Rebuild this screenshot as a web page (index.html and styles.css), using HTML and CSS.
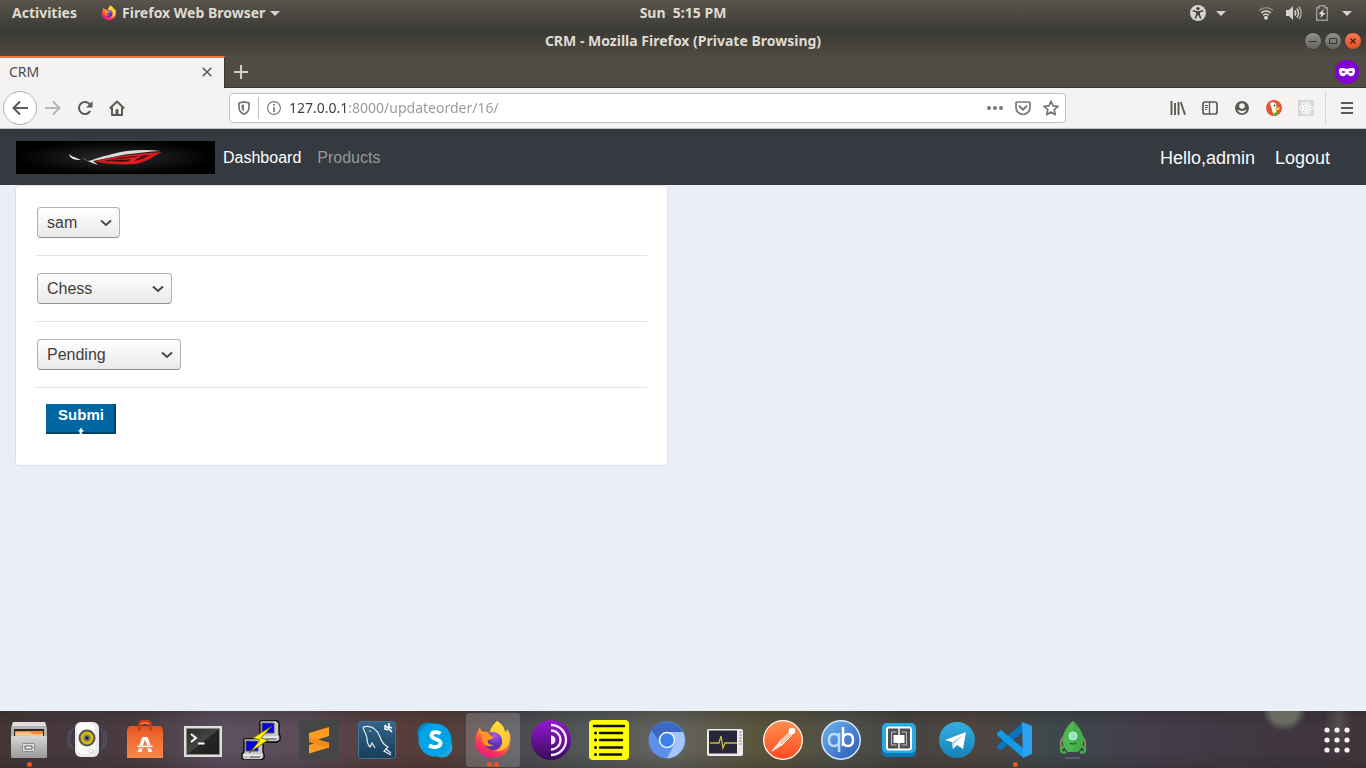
FILE: index.html
```html
<!DOCTYPE html>
<html lang="en">
<head>
<meta charset="utf-8">
<meta name="viewport" content="width=device-width, initial-scale=1">
<title>CRM</title>
<link rel="stylesheet" href="styles.css">
</head>
<body>
<header class="topbar">
  <div class="topbar-side">
    <button class="top-btn" type="button">Activities</button>
    <button class="top-btn app-menu" type="button">
      <svg width="16" height="16" viewBox="0 0 40 40"><use href="#firefox"/></svg>
      <span>Firefox Web Browser</span>
      <svg width="10" height="5" viewBox="0 0 10 5"><path d="M0 0h10L5 5z" fill="#d5d3cf"/></svg>
    </button>
  </div>
  <time class="clock">Sun&nbsp; 5:15 PM</time>
  <div class="topbar-side status">
    <button class="status-btn access" type="button" aria-label="Accessibility">
      <svg width="16" height="16" viewBox="0 0 16 16"><circle cx="8" cy="8" r="8" fill="#d5d3cf"/><circle cx="8" cy="3.6" r="1.7" fill="#45433d"/><path d="M2.800 5.800l4 1v3L5.200 13.500M13.200 5.800l-4 1v3l1.600 3.700" stroke="#45433d" stroke-width="1.600" fill="none"/><path d="M6.200 6.200h3.600v4H6.200z" fill="#45433d"/></svg>
      <svg width="10" height="5" viewBox="0 0 10 5"><path d="M0 0h10L5 5z" fill="#d5d3cf"/></svg>
    </button>
    <button class="status-btn system" type="button" aria-label="System menu">
      <svg width="16" height="16" viewBox="0 0 16 16"><g fill="none" stroke="#d5d3cf" stroke-width="1.600"><path d="M1.200 5.500C5 1.800 11 1.800 14.800 5.500" opacity=".45"/><path d="M3.300 8C6 5.400 10 5.400 12.700 8"/><path d="M5.200 10.300c1.600-1.500 4-1.500 5.600 0"/></g><circle cx="8" cy="12.800" r="2" fill="#d5d3cf"/></svg>
      <svg width="16" height="16" viewBox="0 0 16 16"><path d="M0 5h3l4-4v14l-4-4H0z" fill="#d5d3cf"/><g fill="none" stroke="#d5d3cf" stroke-width="1.500"><path d="M8.700 5.500c1.200 1.500 1.200 3.500 0 5M10.800 3.500c2.200 2.800 2.200 6.200 0 9"/><path d="M12.900 1.700c3 3.800 3 8.800 0 12.600" opacity=".7"/></g></svg>
      <svg width="16" height="16" viewBox="0 0 16 16"><path d="M2.700 2.700h2.600V.7h5.400v2h2.600v12.600H2.700z" fill="none" stroke="#9b9993" stroke-width="1.500"/><path d="M9.700 4L4.600 9.300h2.700L6.400 13l5-5H8.700z" fill="#e3e1dd"/></svg>
      <svg width="10" height="5" viewBox="0 0 10 5"><path d="M0 0h10L5 5z" fill="#d5d3cf"/></svg>
    </button>
  </div>
</header>

<div class="titlebar">
  <span class="window-title">CRM - Mozilla Firefox (Private Browsing)</span>
  <div class="window-controls">
    <button class="win-btn" type="button" aria-label="Minimize"><svg width="8" height="8" viewBox="0 0 8 8"><path d="M0 4.500h8" stroke="#35342f"/></svg></button>
    <button class="win-btn" type="button" aria-label="Maximize"><svg width="8" height="8" viewBox="0 0 8 8"><path d="M.5 1.500h7v5h-7z" fill="none" stroke="#35342f"/></svg></button>
    <button class="win-btn win-close" type="button" aria-label="Close"><svg width="8" height="8" viewBox="0 0 8 8"><path d="M1.500 1.500l5 5m0-5l-5 5" stroke="#4a2011" stroke-width="1.300"/></svg></button>
  </div>
</div>

<div class="tabbar">
  <div class="tab">
    <span>CRM</span>
    <button class="plain-btn" type="button" aria-label="Close tab"><svg width="10" height="10" viewBox="0 0 10 10"><path d="M.7.7l8.600 8.600m0-8.600L.7 9.300" stroke="#555" stroke-width="1.500"/></svg></button>
  </div>
  <button class="plain-btn new-tab" type="button" aria-label="New tab"><svg width="14" height="14" viewBox="0 0 14 14"><path d="M7 0v14M0 7h14" stroke="#d2d0cc" stroke-width="2"/></svg></button>
  <svg class="private" width="24" height="24" viewBox="0 0 24 24"><circle cx="12" cy="12" r="12" fill="#8000d7"/><path fill="#fff" fill-rule="evenodd" d="M4 10.500C4 8 6 7.800 8 8c1.800.2 2.600.8 4 .8S14.200 8.200 16 8c2-.2 4 0 4 2.500 0 3.200-1.300 5.700-4 5.700-2 0-2.600-2-4-2s-2 2-4 2c-2.700 0-4-2.500-4-5.700zm2.300 1.400c1.200 1.500 2.800 1.500 4.200 0-1.400-1.300-3-1.300-4.200 0zm7.200 0c1.400 1.500 3 1.500 4.200 0-1.200-1.300-2.800-1.300-4.200 0z"/></svg>
</div>

<div class="toolbar">
  <div class="nav-buttons">
    <button class="back" type="button" aria-label="Back"><svg width="16" height="16" viewBox="0 0 16 16"><path d="M16 8H1.500M8 1.500L1.500 8 8 14.500" fill="none" stroke="#5c5a56" stroke-width="2"/></svg></button>
    <button class="icon-btn" type="button" aria-label="Forward"><svg width="16" height="16" viewBox="0 0 16 16"><path d="M0 8h14.500M8 1.500L14.500 8 8 14.500" fill="none" stroke="#b8b6b3" stroke-width="2"/></svg></button>
    <button class="icon-btn" type="button" aria-label="Reload"><svg width="16" height="16" viewBox="0 0 16 16"><path d="M13.200 11A6 6 0 1 1 13 4.700" fill="none" stroke="#5c5a56" stroke-width="2"/><path d="M15.500 1v6.500H9z" fill="#5c5a56"/></svg></button>
    <button class="icon-btn" type="button" aria-label="Home"><svg width="16" height="16" viewBox="0 0 16 16"><path d="M.8 8.500L8 1.500l7.200 7M3 7.500V15h10V7.500" fill="none" stroke="#5c5a56" stroke-width="2" stroke-linejoin="round"/><path d="M6.500 15V10.500c0-2 3-2 3 0V15z" fill="#5c5a56"/></svg></button>
  </div>
  <div class="urlbar">
    <button class="plain-btn shield" type="button" aria-label="Tracking protection"><svg width="12" height="14" viewBox="0 0 12 14"><path d="M1 2l5-1.200L11 2v4c0 3.500-2 6-5 7.200C3 12 1 9.500 1 6z" fill="none" stroke="#777" stroke-width="1.700"/><path d="M6 3.400v7C4.300 9.500 3.500 8 3.500 6V4z" fill="#777"/></svg></button>
    <button class="plain-btn info" type="button" aria-label="Site information"><svg width="14" height="14" viewBox="0 0 14 14"><circle cx="7" cy="7" r="6.400" fill="none" stroke="#777" stroke-width="1.100"/><path d="M7 3v1.800M7 6v5" stroke="#777" stroke-width="1.700"/></svg></button>
    <input class="url-input" type="text" aria-label="Address" value="127.0.0.1:8000/updateorder/16/">
    <div class="url-actions">
      <button class="plain-btn" type="button" aria-label="Page actions"><svg width="16" height="16" viewBox="0 0 16 16"><g fill="#777"><circle cx="2" cy="8" r="2"/><circle cx="8" cy="8" r="2"/><circle cx="14" cy="8" r="2"/></g></svg></button>
      <button class="plain-btn" type="button" aria-label="Save to Pocket"><svg width="16" height="16" viewBox="0 0 16 16"><path d="M2 2h12q1 0 1 1v4.500a7 7 0 0 1-14 0V3q0-1 1-1z" fill="none" stroke="#777" stroke-width="1.700"/><path d="M4.500 6.300L8 9.700l3.500-3.400" fill="none" stroke="#777" stroke-width="2" stroke-linecap="round"/></svg></button>
      <button class="plain-btn" type="button" aria-label="Bookmark"><svg width="16" height="16" viewBox="0 0 16 16"><path d="M8 1.200l2 4.600 5 .5-3.800 3.400 1.100 5L8 12.100l-4.300 2.600 1.100-5L1 6.300l5-.5z" fill="none" stroke="#777" stroke-width="1.700" stroke-linejoin="round"/></svg></button>
    </div>
  </div>
  <div class="tool-buttons">
    <button class="icon-btn" type="button" aria-label="Library"><svg width="16" height="16" viewBox="0 0 16 16"><path d="M1.500 1v14M5 3v12M8.500 2v13M10.800 2.300L15 14.800" stroke="#5c5a56" stroke-width="1.900"/></svg></button>
    <button class="icon-btn" type="button" aria-label="Sidebars"><svg width="16" height="16" viewBox="0 0 16 16"><rect x="1" y="2" width="14" height="12" rx="2" fill="none" stroke="#5c5a56" stroke-width="1.700"/><path d="M7.500 2v12" stroke="#5c5a56" stroke-width="1.300"/><path d="M3 5.500h3M3 7.500h3M3 9.500h2" stroke="#5c5a56"/></svg></button>
    <button class="icon-btn" type="button" aria-label="Account"><svg width="16" height="16" viewBox="0 0 16 16"><circle cx="8" cy="8" r="7" fill="#5c5a56"/><circle cx="8" cy="6" r="2.800" fill="#f4f3f2"/><path d="M3.500 9.800c2.500 1.500 6.500 1.500 9 0-.8 2.200-2.500 3.500-4.500 3.500s-3.700-1.300-4.500-3.500z" fill="#f4f3f2"/></svg></button>
    <button class="icon-btn" type="button" aria-label="DuckDuckGo"><svg width="16" height="16" viewBox="0 0 16 16"><circle cx="8" cy="8" r="8" fill="#de5833"/><path d="M4 3.500C6 1.200 10 2 10.500 5.500L10 9l1 5.500-3.500.8L5.500 8C5 6 4.500 5 4 3.500z" fill="#fff"/><circle cx="8.500" cy="5.500" r=".9" fill="#245"/><path d="M9 8l5-1-1 2 1 .8-4.500 1z" fill="#fc3"/><path d="M7 13l5-1v3l-4 .5z" fill="#4caf35"/></svg></button>
    <button class="icon-btn" type="button" aria-label="React tools"><svg width="16" height="16" viewBox="0 0 16 16"><path d="M0 0h16v16H0z" fill="#d9d8d7"/><g fill="none" stroke="#fff"><ellipse cx="8" cy="8" rx="6.500" ry="2.500"/><ellipse cx="8" cy="8" rx="6.500" ry="2.500" transform="rotate(60 8 8)"/><ellipse cx="8" cy="8" rx="6.500" ry="2.500" transform="rotate(120 8 8)"/></g><circle cx="8" cy="8" r="1.300" fill="#fff"/></svg></button>
    <span class="separator"></span>
    <button class="icon-btn" type="button" aria-label="Menu"><svg width="16" height="16" viewBox="0 0 16 16"><path d="M2 3h12M2 8h12M2 13h12" stroke="#5c5a56" stroke-width="2"/></svg></button>
  </div>
</div>

<nav class="navbar">
  <a class="brand" href="#" aria-label="Home page">
    <svg width="199" height="33" viewBox="0 0 199 33">
      <defs><radialGradient id="glow"><stop offset="0" stop-color="#2c2c2c"/><stop offset="1" stop-color="#000"/></radialGradient></defs>
      <path d="M0 0h199v33H0z" fill="url(#glow)"/>
      <path d="M53 13c2 2 4 3 5 3l7 3c-6 0-11-1-12-6z" fill="#eee"/>
      <path d="M65.500 16l6.500 4 4-1c9-3 22-7 35-9 11-1.300 22-1.500 34 0-12 .5-24 2-36 3.500L77 20l5 4c-6-2-12-4-16.500-8z" fill="#dcdcdc"/>
      <path d="M78 20.500c20-5 44-8.500 68-9.500-8 4-15 10-26 12-13 1-28 0-42-2.500z" fill="#d61b1f"/>
      <path d="M88 20c14-3 28-5 46-6-5 2-8 4-11 5-10 2-24 2-35 1z" fill="#3d090b"/>
      <path d="M92 19.500l36-4.500-8 3zM100 21.500l24-1-6 1.500zM112 20l14-7-8 7z" fill="#e52226"/>
    </svg>
  </a>
  <a class="nav-link active" href="#">Dashboard</a>
  <a class="nav-link" href="#">Products</a>
  <div class="user-links"><span>Hello,admin</span><a href="#">Logout</a></div>
</nav>

<main class="page">
  <form class="card">
    <select class="field customer" aria-label="Customer"><option>sam</option></select>
    <hr>
    <select class="field product" aria-label="Product"><option>Chess</option></select>
    <hr>
    <select class="field order-status" aria-label="Status"><option>Pending</option></select>
    <hr>
    <button class="submit" type="button">Submit</button>
  </form>
</main>

<footer class="dock">
  <button class="dock-item" type="button" aria-label="Files">
    <svg width="40" height="40" viewBox="0 0 40 40"><defs><linearGradient id="metal" x2="0" y2="1"><stop stop-color="#d6d6d6"/><stop offset="1" stop-color="#999"/></linearGradient></defs><path d="M4 2h32l2 6v28q0 2-2 2H4q-2 0-2-2V8z" fill="#b3b3b3"/><path d="M4 2h32l1 4H3z" fill="#dedede"/><path d="M5 9h30v8H5z" fill="#262626"/><path d="M6 11h28v6H6z" fill="#f4853d"/><path d="M7 12h14l2 2h11v3H6z" fill="#ffc18c"/><path d="M2 16h36v20q0 2-2 2H4q-2 0-2-2z" fill="url(#metal)"/><rect x="13.500" y="23.500" width="12" height="8" rx="1" fill="#ddd" stroke="#8a8a8a"/><path d="M16 26h7v3h-7z" fill="#fff" stroke="#555"/></svg>
    <span class="dots"><i></i></span>
  </button>
  <button class="dock-item" type="button" aria-label="Music">
    <svg width="40" height="40" viewBox="0 0 40 40"><g fill="none" stroke="#4e6c91" stroke-width="1.500" opacity=".5"><path d="M6 8c-4 7-4 15 0 22M3 10c-3 6-3 12 0 18M34 8c4 7 4 15 0 22M37 10c3 6 3 12 0 18"/></g><rect x="8" y="2" width="24" height="35" rx="6" fill="#ebebeb"/><rect x="10" y="3" width="18" height="31" rx="6" fill="#fafafa"/><circle cx="20" cy="18" r="8.500" fill="#55554c"/><circle cx="20" cy="18" r="6.500" fill="#d8b70d"/><circle cx="20" cy="18" r="3.500" fill="#777"/><circle cx="20" cy="18" r="1.700" fill="#222"/><circle cx="24" cy="31" r="2" fill="#fff" stroke="#ccc"/></svg>
  </button>
  <button class="dock-item" type="button" aria-label="Software">
    <svg width="40" height="40" viewBox="0 0 40 40"><defs><linearGradient id="bag" x2="0" y2="1"><stop stop-color="#e2521e"/><stop offset=".3" stop-color="#ee6a2f"/><stop offset="1" stop-color="#f7874b"/></linearGradient></defs><path d="M4 6h32l2 4v28H2V10z" fill="url(#bag)"/><path d="M14.500 11V4q0-3 5.500-3t5.500 3v7" fill="none" stroke="#c9400f" stroke-width="2.500"/><path d="M16 4q4-2 8 0" stroke="#ff7042" fill="none" stroke-width="2"/><path d="M17.500 17h5l3 8H22l-2-5-2 5h-3.500zM12.500 25.500h15v1.800h-15zM14 28.500h3.700l-1 3.500h-4zM22.300 28.500H26l1.300 3.500h-4z" fill="#fff"/></svg>
  </button>
  <button class="dock-item" type="button" aria-label="Terminal">
    <svg width="40" height="40" viewBox="0 0 40 40"><defs><linearGradient id="screen" x2="1" y2="1"><stop stop-color="#2a2c2c"/><stop offset=".5" stop-color="#434545"/><stop offset=".51" stop-color="#252727"/><stop offset="1" stop-color="#1c1e1e"/></linearGradient></defs><path d="M1 6h38v31H1z" fill="#dededb"/><path d="M3.500 8.500h33v26h-33z" fill="url(#screen)" stroke="#8b8b88"/><path d="M8 14l5 4-5 4M15 23.500h6.500" fill="none" stroke="#fff" stroke-width="2"/></svg>
  </button>
  <button class="dock-item" type="button" aria-label="PuTTY">
    <svg width="40" height="40" viewBox="0 0 40 40"><g id="pc"><path d="M20 1h16l2 2v11l1 2v4l-3 2H19l-2-2v-4l2-2V2z" fill="#c8c8c8" stroke="#000" stroke-width="1.300"/><path d="M21 3h12v10H21z" fill="#0000de" stroke="#555"/><path d="M18 17h19M20 3V2h15" stroke="#fff"/><path d="M25 19h10" stroke="#555"/></g><use href="#pc" x="-16" y="18"/><path d="M31 6L12 18l7 2-8 10-3 3 19-13-7-2z" fill="#ffef00" stroke="#665f00" stroke-width=".8"/></svg>
  </button>
  <button class="dock-item" type="button" aria-label="Sublime Text">
    <svg width="40" height="40" viewBox="0 0 40 40"><rect width="40" height="40" rx="2" fill="#464646"/><path d="M10 13l20-6v9l-11 3.500L30 23v4.500l-20 6v-8.500l11-3.500-11-3.500z" fill="#ff9b22"/><path d="M10 18l20 4.500L28 28l-18-6z" fill="#f48a16"/></svg>
  </button>
  <button class="dock-item" type="button" aria-label="MySQL Workbench">
    <svg width="40" height="40" viewBox="0 0 40 40"><defs><linearGradient id="sql" x2="0" y2="1"><stop stop-color="#32658c"/><stop offset="1" stop-color="#183e5b"/></linearGradient></defs><rect x="1.500" y="1.500" width="37" height="37" rx="3" fill="url(#sql)" stroke="#427497"/><path d="M6 7c8-2 14 2 17 10 2 6 4 8 8 10l-2 2 5 4M6 7c1 5 3 6 4 11 0 5 1 7 3 9l2-4 3 5M29 29l-2 2 7 4" fill="none" stroke="#e5edf2" stroke-width="1.200"/><circle cx="13" cy="11" r=".8" fill="#fff"/><path d="M28 5l3 3M31 8l4 4M28 5v4l3 1M32 3v4l3 1" stroke="#fff" stroke-width="1.600" fill="none"/></svg>
  </button>
  <button class="dock-item" type="button" aria-label="Skype">
    <svg width="40" height="40" viewBox="0 0 40 40"><circle cx="13" cy="13" r="10.500" fill="#0786c9"/><circle cx="27" cy="27" r="10.500" fill="#21a5e2"/><circle cx="20" cy="20" r="16.500" fill="#00a5e8"/><path d="M25.500 13.500c-3-2-9-2-9 2s9 3 9 7.500-7 5-11.500 2.500" fill="none" stroke="#fff" stroke-width="3.800"/></svg>
  </button>
  <button class="dock-item active" type="button" aria-label="Firefox">
    <svg width="40" height="40" viewBox="0 0 40 40"><defs><linearGradient id="fire" x1=".8" y1="0" x2=".3" y2="1"><stop stop-color="#fff34a"/><stop offset=".42" stop-color="#ff962e"/><stop offset=".72" stop-color="#ff3b50"/><stop offset="1" stop-color="#e31587"/></linearGradient><radialGradient id="globe" cx=".6" cy=".2"><stop stop-color="#ad61f5"/><stop offset="1" stop-color="#5633b7"/></radialGradient></defs><g id="firefox"><path d="M24 1c5 3 7 6 8 11 2-1 2-2 2-3 4 5 4 9 3 14-1 9-8 15-17 15S2 31 2 22C2 16 4 12 7 7c0 3 1 4 3 5 2-1 5 0 6 2 1-4 3-8 8-13z" fill="url(#fire)"/><circle cx="20" cy="21" r="9" fill="url(#globe)"/><path d="M7 7c0 3 1 4 3 5 5-1 6 2 8 4 4 0 2 4-3 4-1 2 0 5 6 5-8 4-14-2-11-10-4-1-4-5-3-8z" fill="#ff9820"/><path d="M24 1c-5 5-7 8-6 11 5-1 10 1 11 6 2 8-2 12-8 13 14 2 19-10 11-19-1-5-3-8-8-11z" fill="#ffda36" opacity=".8"/></g></svg>
    <span class="dots"><i></i><i></i></span>
  </button>
  <button class="dock-item" type="button" aria-label="Tor Browser">
    <svg width="40" height="40" viewBox="0 0 40 40"><defs><linearGradient id="tor" x2="0" y2="1"><stop stop-color="#9418d3"/><stop offset="1" stop-color="#3b0b5a"/></linearGradient></defs><circle cx="20" cy="20" r="20" fill="url(#tor)"/><path d="M20 5a15 15 0 0 1 0 30M20 10.500a9.500 9.500 0 0 1 0 19" fill="none" stroke="#f4e9fa" stroke-width="2.300"/><path d="M20 15.500a4.500 4.500 0 0 1 0 9z" fill="#f4e9fa"/></svg>
  </button>
  <button class="dock-item" type="button" aria-label="Notes">
    <svg width="40" height="40" viewBox="0 0 40 40"><rect width="40" height="40" rx="4" fill="#ff0"/><g fill="none" stroke="#111" stroke-width="2.500" stroke-linecap="round"><path d="M5 6h30M11 13h22M11 20h22M11 27.500h22M11 34.500h21"/><path d="M6.500 13h.1M6.500 20h.1M6.500 27.500h.1M6.500 34.500h.1" stroke-width="3"/></g></svg>
  </button>
  <button class="dock-item" type="button" aria-label="Chromium">
    <svg width="40" height="40" viewBox="0 0 40 40"><circle cx="20" cy="20" r="18.500" fill="#5c91eb"/><path d="M4.500 10A18.500 18.500 0 0 1 36 12H20q-8 1-9 8z" fill="#3c67c4"/><path d="M36 12a18.500 18.500 0 0 1-16 26.500L28 23q2-6-8-11z" fill="#a5c5fa"/><circle cx="20" cy="20" r="7.500" fill="#3c80e9" stroke="#f1f6ff" stroke-width="1.500"/></svg>
  </button>
  <button class="dock-item" type="button" aria-label="System Monitor">
    <svg width="40" height="40" viewBox="0 0 40 40"><rect x="2" y="9" width="36" height="27" rx="2" fill="#eeebea"/><path d="M4 10.500h28v23H4z" fill="#292638"/><path d="M5 23h9l2-7 2 12 2-5h12" fill="none" stroke="#c5bf45" stroke-width="1.300"/><path d="M34.500 12h2M34.500 15h2M34.500 18h2M34.500 21h2M34.500 24h2" stroke="#999" stroke-width="1.500"/></svg>
  </button>
  <button class="dock-item" type="button" aria-label="Postman">
    <svg width="40" height="40" viewBox="0 0 40 40"><defs><linearGradient id="post" x2="0" y2="1"><stop stop-color="#ff914b"/><stop offset="1" stop-color="#ff4b24"/></linearGradient></defs><circle cx="20" cy="20" r="19.300" fill="url(#post)" stroke="#fff" stroke-width="1.300"/><circle cx="29" cy="11" r="3.200" fill="#fff"/><path d="M26 13l-9 8-2 3-6 7 8-5 3-2 9-9zM27 11l2 4" fill="#ffe3d8" stroke="#fff"/><path d="M17 22l9-8M18 24l10-9" stroke="#ff7040" stroke-width=".7"/></svg>
  </button>
  <button class="dock-item" type="button" aria-label="qBittorrent">
    <svg width="40" height="40" viewBox="0 0 40 40"><defs><linearGradient id="qb" x2="1" y2="1"><stop stop-color="#72b4f5"/><stop offset="1" stop-color="#2658b4"/></linearGradient></defs><circle cx="20" cy="20" r="19.200" fill="url(#qb)" stroke="#d8e8f8" stroke-width="1.500"/><g fill="none" stroke-width="2.500"><path d="M18 13v19M18 19q0-5-5-5t-5 6 5 6 5-5" stroke="#b9ddff"/><path d="M22 7v19M22 19q0-5 5-5t5 6-5 6-5-5" stroke="#fff"/></g></svg>
  </button>
  <button class="dock-item" type="button" aria-label="Brackets">
    <svg width="40" height="40" viewBox="0 0 40 40"><rect x="3" y="3" width="34" height="34" rx="5" fill="#0878b8"/><rect x="3" y="3" width="34" height="30" rx="5" fill="#29a9e1"/><rect x="8" y="7.500" width="24" height="22" rx="2" fill="#4f4f4f" stroke="#fff" stroke-width="2"/><path d="M17.500 12h-5v13h5M22.500 12h5v13h-5" fill="none" stroke="#dcdcdc" stroke-width=".8"/><path d="M14.500 15h11v8h-11zM19.300 8h1.400v7h-1.400zM19.300 23h1.400v6h-1.400z" fill="#fff"/></svg>
  </button>
  <button class="dock-item" type="button" aria-label="Telegram">
    <svg width="40" height="40" viewBox="0 0 40 40"><defs><linearGradient id="tele" x2="0" y2="1"><stop stop-color="#35ade1"/><stop offset="1" stop-color="#1682b9"/></linearGradient></defs><circle cx="20" cy="20" r="18" fill="url(#tele)"/><path d="M8 20l21-8-3 17-6-4-4 4-1-7z" fill="#fff"/><path d="M15 22l11-7-9 9-1 5z" fill="#b9d4e7"/></svg>
  </button>
  <button class="dock-item" type="button" aria-label="Visual Studio Code">
    <svg width="40" height="40" viewBox="0 0 40 40"><path d="M2 26L28 2v10L6 30l-4-2z" fill="#0874ba"/><path d="M2 13l4-3 22 18v9.500L2 15z" fill="#149be8"/><path d="M27 2l10 4v28l-9 4z" fill="#2ba3f2"/></svg>
    <span class="dots"><i></i></span>
  </button>
  <button class="dock-item" type="button" aria-label="Robo 3T">
    <svg width="40" height="40" viewBox="0 0 40 40"><path d="M10 17q-4 6-1 12M30 17q4 6 1 12" fill="none" stroke="#98835d" stroke-width="2"/><path d="M20 1c15 14 11 25 5 31H15C9 26 5 15 20 1z" fill="#43ae4e"/><path d="M20 1v31h-5C9 26 5 15 20 1z" fill="#4fb652"/><path d="M13 32q-5 2-5-3 0-2 3-2M27 32q5 2 5-3 0-2-3-2" fill="none" stroke="#42ad4a" stroke-width="2.500"/><circle cx="20" cy="16" r="4" fill="#8ce6bc" stroke="#ccefdc"/><path d="M17 23q3 2 6 0" fill="none" stroke="#186d2c" stroke-width="1.500"/><path d="M12 38h15" stroke="#777"/></svg>
  </button>
  <button class="dock-item show-apps" type="button" aria-label="Show applications">
    <svg width="40" height="40" viewBox="0 0 40 40"><g fill="#f4f2f2"><circle cx="10" cy="10" r="2.600"/><circle cx="20" cy="10" r="2.600"/><circle cx="30" cy="10" r="2.600"/><circle cx="10" cy="20" r="2.600"/><circle cx="20" cy="20" r="2.600"/><circle cx="30" cy="20" r="2.600"/><circle cx="10" cy="30" r="2.600"/><circle cx="20" cy="30" r="2.600"/><circle cx="30" cy="30" r="2.600"/></g></svg>
  </button>
</footer>
</body>
</html>
```
FILE: styles.css
```css
* { box-sizing: border-box; }

body {
  margin: 0;
  min-height: 100vh;
  display: flex;
  flex-direction: column;
  background: #eaeef6;
  font-family: "Liberation Sans", Arial, sans-serif;
  font-size: 16px;
  line-height: 24px;
}

svg { display: block; flex: none; }
button { font: inherit; cursor: pointer; }

.topbar, .titlebar, .tabbar, .toolbar { font-family: "Noto Sans", sans-serif; font-size: 14px; }

/* Desktop panel */
.topbar {
  display: grid;
  grid-template-columns: 1fr auto 1fr;
  align-items: center;
  height: 28px;
  padding-bottom: 2px;
  background: linear-gradient(#59554c, #3d3c37);
  color: #dfdbd2;
  font-weight: bold;
}
.topbar-side { display: flex; align-items: center; gap: 24px; padding-left: 12px; }
.top-btn, .status-btn, .plain-btn, .icon-btn {
  display: flex;
  align-items: center;
  justify-content: center;
  padding: 0;
  border: 0;
  background: none;
  color: inherit;
}
.app-menu { gap: 5px; }
.status { justify-content: flex-end; gap: 32px; padding-right: 14px; }
.access { gap: 10px; }
.system { gap: 12px; }

/* Window frame */
.titlebar {
  display: grid;
  grid-template-columns: 1fr auto 1fr;
  align-items: center;
  height: 28px;
  padding-bottom: 2px;
  background: linear-gradient(#393833, #4d4a42);
  color: #dfdbd2;
  font-weight: bold;
}
.window-title { grid-column: 2; }
.window-controls { display: flex; justify-content: flex-end; gap: 4px; padding-right: 5px; }
.win-btn {
  display: flex;
  align-items: center;
  justify-content: center;
  width: 16px;
  height: 16px;
  padding: 0;
  border: 0;
  border-radius: 50%;
  background: linear-gradient(#92908a, #66645e);
  box-shadow: 0 0 1px #24231f;
}
.win-close { background: linear-gradient(#f47b55, #e04d1d); }

.tabbar {
  display: flex;
  align-items: center;
  height: 32px;
  background: #504c44;
  border-bottom: 1px solid #38362f;
}
.tab {
  display: flex;
  align-items: center;
  justify-content: space-between;
  width: 225px;
  height: 32px;
  padding: 0 12px 2px 9px;
  margin-bottom: -1px;
  border-top: 2px solid #f0774a;
  border-right: 1px solid #38362f;
  background: #f4f3f2;
  color: #4b4d52;
}
.new-tab { width: 32px; height: 30px; }
.private { margin: 0 7px 0 auto; }

.toolbar {
  display: flex;
  align-items: center;
  height: 41px;
  padding: 0 3px;
  background: #f4f3f2;
  border-bottom: 1px solid #c5c2be;
}
.nav-buttons, .tool-buttons { display: flex; align-items: center; }
.icon-btn { width: 32px; height: 32px; }
.back {
  display: flex;
  align-items: center;
  justify-content: center;
  width: 34px;
  height: 34px;
  padding: 0;
  border: 1px solid #b5b3b0;
  border-radius: 50%;
  background: #fff;
}
.urlbar {
  display: flex;
  flex: 1;
  align-items: center;
  height: 30px;
  margin: 0 96px;
  padding: 0 6px 0 0;
  background: #fff;
  border: 1px solid #c2c0bc;
  border-radius: 4px;
}
.shield { width: 29px; height: 22px; border-right: 1px solid #c2c0bc; }
.info { width: 30px; }
.url-input {
  flex: 1;
  min-width: 0;
  padding: 0;
  border: 0;
  outline: 0;
  font: inherit;
  line-height: 24px;
  color: transparent;
  background: linear-gradient(to right, #3c3b3a 60px, #989796 60px);
  background-clip: text;
}
.url-actions { display: flex; gap: 12px; }
.separator { width: 1px; height: 34px; margin: 0 5px 0 3px; background: #dcdad8; }

/* Site navigation */
.navbar {
  display: flex;
  align-items: center;
  height: 56px;
  padding: 0 36px 0 16px;
  background: #343a40;
}
.nav-link { padding: 9px 8px 7px; color: #95989b; text-decoration: none; }
.nav-link.active { color: #fff; }
.user-links { display: flex; gap: 20px; margin-left: auto; padding-top: 2px; color: #f8f9fa; font-size: 18px; }
.user-links a { color: inherit; text-decoration: none; }

/* Order form */
.page { flex: 1; padding: 0 15px; }
.card {
  display: flex;
  flex-direction: column;
  align-items: flex-start;
  width: calc(50% - 15px);
  padding: 20px;
  background: #fff;
  border: 1px solid #dcdfe3;
  border-radius: 4px;
}
.card hr { width: 100%; margin: 16px 0; border: 0; border-top: 1px solid #e2e2e2; }
.field {
  appearance: none;
  height: 31px;
  margin: 1px;
  padding: 0 28px 0 9px;
  border: 1px solid #b3b1af;
  border-bottom-color: #92908e;
  border-radius: 4px;
  color: #3d3d3d;
  font: inherit;
  background: url("data:image/svg+xml,%3Csvg xmlns='http://www.w3.org/2000/svg' width='12' height='8' viewBox='0 0 12 8'%3E%3Cpath d='M1 1.500L6 6l5-4.500' fill='none' stroke='%23484848' stroke-width='2'/%3E%3C/svg%3E") no-repeat right 7px center, linear-gradient(#fff, #ebe9e7);
}
.customer { width: 83px; }
.product { width: 135px; }
.order-status { width: 144px; }
.submit {
  width: 70px;
  height: 30px;
  margin: 0 0 11px 10px;
  padding: 2px 12px;
  overflow: hidden;
  border: 0;
  background: #0067a3;
  box-shadow: inset -2px -2px #00446c;
  color: #fff;
  font-size: 15px;
  font-weight: bold;
  line-height: 18px;
  word-break: break-all;
}

/* Launcher */
.dock {
  display: flex;
  height: 57px;
  background:
    radial-gradient(ellipse 22px 20px at 94% 0, #696c63 60%, transparent),
    radial-gradient(ellipse 14px 34px at 98% 20%, #6668, transparent),
    linear-gradient(to bottom, #2224 0, transparent 30%, transparent 70%, #2224),
    linear-gradient(to right, #443536 0, #4b3c42 10%, #5d5060 16%, #5b4d57 22%, #573f42 27%, #563d36 32%, #4c4b50 38%, #535858 43%, #64645e 49%, #59543a 56%, #50504a 62%, #444441 66%, #50453f 71%, #3e484c 77%, #443e4b 84%, #403842 91%, #40343a 100%);
}
.dock-item {
  position: relative;
  display: flex;
  align-items: center;
  justify-content: center;
  flex: 0 1 54px;
  height: 54px;
  margin: 2px;
  padding: 0;
  border: 0;
  border-radius: 3px;
  background: none;
}
.dock-item.active { background: #ffffff2e; }
.show-apps { margin-left: auto; }
.dots { position: absolute; bottom: 0; left: 0; right: 0; display: flex; justify-content: center; gap: 2px; }
.dots i { width: 5px; height: 5px; border-radius: 50%; background: #ee5420; }
```
